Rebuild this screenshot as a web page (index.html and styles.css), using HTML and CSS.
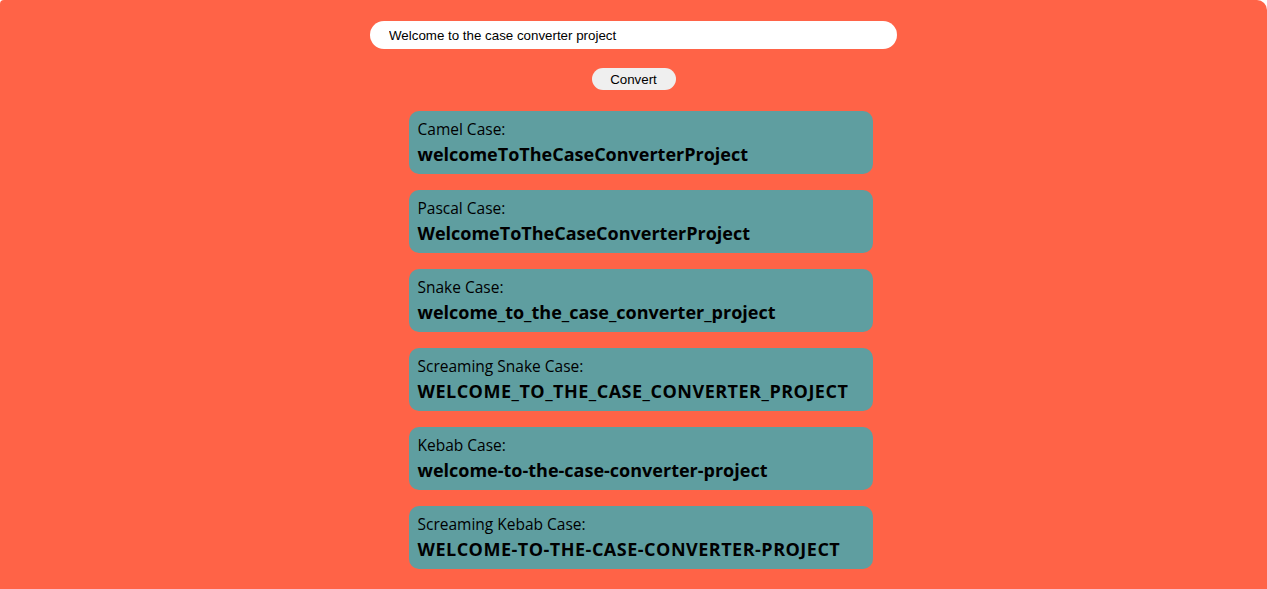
FILE: index.html
```html
<!DOCTYPE html>
<html lang="en">
<head>
<meta charset="utf-8">
<title>Case Converter</title>
<link rel="stylesheet" href="styles.css">
</head>
<body>
<div class="app">
  <input class="text-input" type="text" value="Welcome to the case converter project">
  <button class="convert-btn">Convert</button>
  <div class="results">
    <div class="card"><div class="label">Camel Case:</div><div class="value">welcomeToTheCaseConverterProject</div></div>
    <div class="card"><div class="label">Pascal Case:</div><div class="value">WelcomeToTheCaseConverterProject</div></div>
    <div class="card"><div class="label">Snake Case:</div><div class="value">welcome_to_the_case_converter_project</div></div>
    <div class="card"><div class="label">Screaming Snake Case:</div><div class="value caps">WELCOME_TO_THE_CASE_CONVERTER_PROJECT</div></div>
    <div class="card"><div class="label">Kebab Case:</div><div class="value">welcome-to-the-case-converter-project</div></div>
    <div class="card"><div class="label">Screaming Kebab Case:</div><div class="value caps">WELCOME-TO-THE-CASE-CONVERTER-PROJECT</div></div>
  </div>
</div>
</body>
</html>
```
FILE: styles.css
```css
html, body {
  margin: 0;
  padding: 0;
  background: #ffffff;
}
.app {
  background: #ff6347;
  min-height: 589px;
  border-radius: 4px 10px 0 0;
  display: flex;
  flex-direction: column;
  align-items: center;
  padding-top: 21px;
  box-sizing: border-box;
}
.text-input {
  width: 527px;
  height: 28px;
  box-sizing: border-box;
  border: none;
  border-radius: 14px;
  background: #ffffff;
  padding: 0 19px;
  font-family: "Liberation Sans", Arial, sans-serif;
  font-size: 13.33px;
  color: #000;
  outline: none;
}
.convert-btn {
  margin-top: 19px;
  width: 84px;
  height: 22px;
  border: none;
  border-radius: 11px;
  background: #efefef;
  font-family: "Liberation Sans", Arial, sans-serif;
  font-size: 13.33px;
  color: #000;
  padding: 0;
}
.results {
  margin-top: 21px;
  padding-left: 14px;
  display: flex;
  flex-direction: column;
  gap: 16px;
}
.card {
  width: 464px;
  height: 63px;
  box-sizing: border-box;
  background: #5f9ea0;
  border-radius: 10px;
  padding: 8px 9px;
  font-family: "Open Sans", "Noto Sans", sans-serif;
  color: #000;
}
.label {
  font-size: 15.5px;
  line-height: 20px;
}
.value {
  margin-top: 2px;
  font-size: 18px;
  font-weight: 700;
  line-height: 26px;
}
.value.caps {
  letter-spacing: 0.5px;
}
```
